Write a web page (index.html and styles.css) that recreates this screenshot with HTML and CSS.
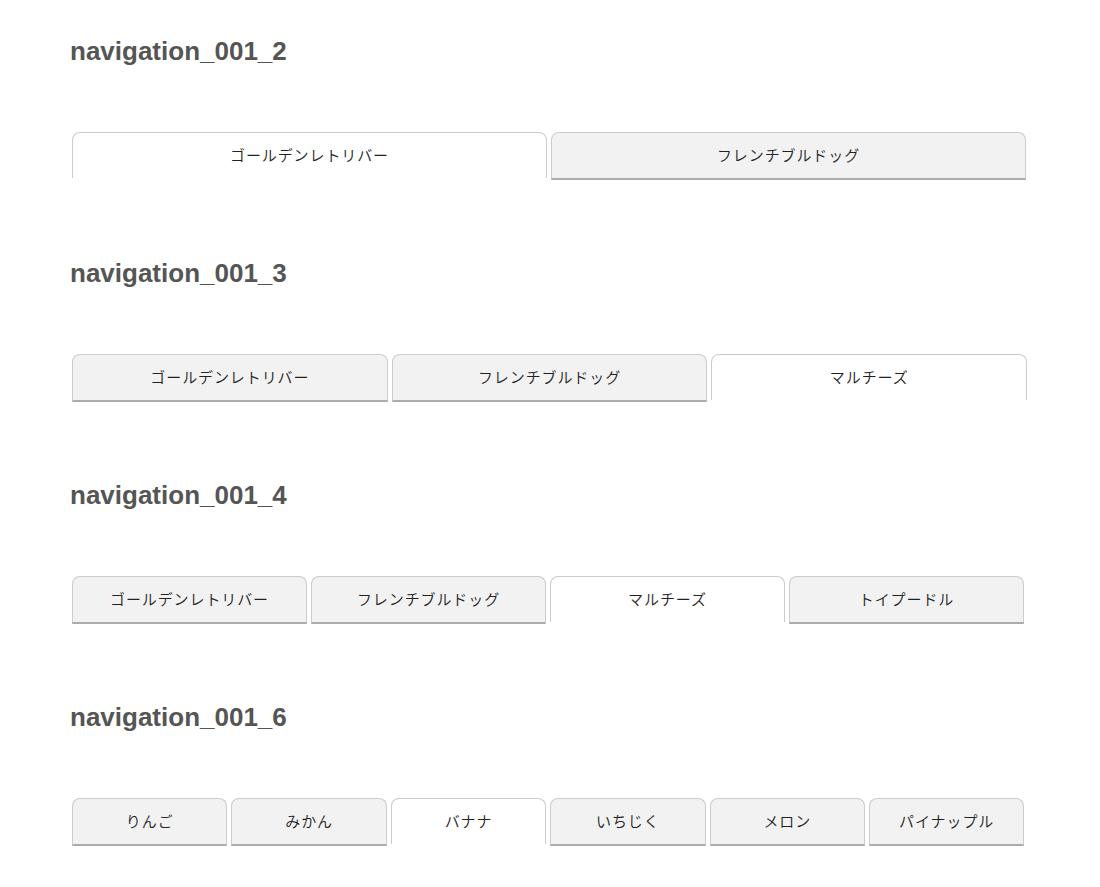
FILE: index.html
```html
<!DOCTYPE html>
<html lang="ja">
<head>
<meta charset="utf-8">
<title>navigation_001</title>
<link rel="stylesheet" href="styles.css">
</head>
<body>
<main class="page">
  <section class="demo">
    <h2 class="demo-title">navigation_001_2</h2>
    <ul class="tabs tabs-2">
      <li class="tab is-active">ゴールデンレトリバー</li>
      <li class="tab">フレンチブルドッグ</li>
    </ul>
  </section>
  <section class="demo">
    <h2 class="demo-title">navigation_001_3</h2>
    <ul class="tabs tabs-3">
      <li class="tab">ゴールデンレトリバー</li>
      <li class="tab">フレンチブルドッグ</li>
      <li class="tab is-active">マルチーズ</li>
    </ul>
  </section>
  <section class="demo">
    <h2 class="demo-title">navigation_001_4</h2>
    <ul class="tabs tabs-4">
      <li class="tab">ゴールデンレトリバー</li>
      <li class="tab">フレンチブルドッグ</li>
      <li class="tab is-active">マルチーズ</li>
      <li class="tab">トイプードル</li>
    </ul>
  </section>
  <section class="demo">
    <h2 class="demo-title">navigation_001_6</h2>
    <ul class="tabs tabs-6">
      <li class="tab">りんご</li>
      <li class="tab">みかん</li>
      <li class="tab is-active">バナナ</li>
      <li class="tab">いちじく</li>
      <li class="tab">メロン</li>
      <li class="tab">パイナップル</li>
    </ul>
  </section>
</main>
</body>
</html>
```

FILE: styles.css
```css
html, body {
  margin: 0;
  padding: 0;
  background: #ffffff;
}

.page {
  padding: 36px 0 0 70px;
}

.demo {
  margin: 0 0 78px 0;
}

.demo-title {
  margin: 0 0 66px 0;
  font-family: "Liberation Sans", Arial, sans-serif;
  font-weight: bold;
  font-size: 26px;
  line-height: 30px;
  color: #555555;
}

.tabs {
  list-style: none;
  margin: 0 0 0 2px;
  padding: 0;
  display: flex;
  align-items: flex-start;
  gap: 4px;
}

.tab {
  box-sizing: border-box;
  height: 48px;
  padding-bottom: 2px;
  border: 1px solid #cccccc;
  border-bottom: 2px solid #acacac;
  border-radius: 8px 8px 0 0;
  background: #f2f2f2;
  display: flex;
  align-items: center;
  justify-content: center;
  font-family: "Noto Sans CJK JP", "Noto Sans", sans-serif;
  font-weight: 350;
  font-size: 15px;
  color: #222222;
  letter-spacing: 0.9px;
}

.tab.is-active {
  height: 46px;
  background: #ffffff;
  border-bottom: none;
}

.tabs-2 .tab { flex: 0 0 475px; }
.tabs-3 .tab { flex: 0 0 315.7px; }
.tabs-4 .tab { flex: 0 0 235px; }
.tabs-6 .tab { flex: 0 0 155.4px; }
```
